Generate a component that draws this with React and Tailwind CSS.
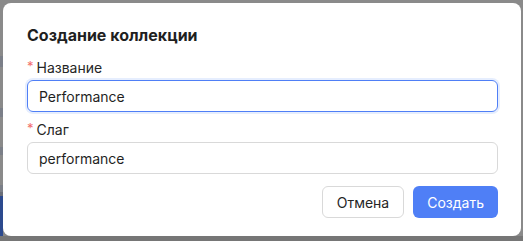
import { useState } from "react";

const Field = ({ label, value, onChange, focused }) => (
  <div className="flex flex-col">
    <label className="flex items-center h-[22px] mb-[2px] text-[14px] text-[#262626]">
      <span className="text-[#f26d6d] mr-[3px] text-[13px]">*</span>
      {label}
    </label>
    <input
      value={value}
      onChange={onChange}
      className={`h-[32px] w-full rounded-[6px] border px-[11px] text-[14px] text-[#1f1f1f] outline-none ${
        focused
          ? "border-[#4f7ff6] ring-2 ring-[#e6eefe]"
          : "border-[#d9d9d9]"
      }`}
    />
  </div>
);

const App = () => {
  const [name, setName] = useState("Performance");
  const [slug, setSlug] = useState("performance");

  return (
    <div
      className="relative w-[523px] h-[241px] overflow-hidden bg-[#8a8a8a]"
      style={{ fontFamily: "Inter, 'Noto Sans', sans-serif" }}
    >
      {/* page behind the overlay */}
      <div className="flex flex-col w-[3px] h-full pt-[56px]">
        <div className="h-[11px] bg-[#7b7f88]" />
        <div className="h-[41px]" />
        <div className="h-[9px] bg-[#7b7f88]" />
        <div className="h-[30px]" />
        <div className="h-[8px] bg-[#7b7f88]" />
        <div className="h-[30px]" />
        <div className="h-[7px] bg-[#7b7f88]" />
        <div className="h-[4px] bg-[#6a6e78]" />
        <div className="h-[40px] bg-[#2c4a8e]" />
      </div>
      <div className="absolute left-0 right-0 bottom-0 h-[5px] bg-[#767676]" />

      {/* modal */}
      <div className="absolute left-[3px] top-[3px] w-[518px] h-[233px] rounded-[8px] bg-white pt-[20px] pl-[24px] pr-[23px] pb-[18px] flex flex-col">
        <h2 className="h-[24px] flex items-center text-[16px] font-bold text-[#1f1f1f] mb-[9px]">
          Создание коллекции
        </h2>
        <Field label="Название" value={name} onChange={(e) => setName(e.target.value)} focused />
        <div className="h-[8px]" />
        <Field label="Слаг" value={slug} onChange={(e) => setSlug(e.target.value)} />
        <div className="flex justify-end gap-[9px] mt-[12px]">
          <button className="h-[32px] px-[14px] rounded-[6px] border border-[#d9d9d9] bg-white text-[14px] text-[#262626]">
            Отмена
          </button>
          <button className="h-[32px] px-[14px] rounded-[6px] bg-[#4f7ff6] text-[14px] text-white">
            Создать
          </button>
        </div>
      </div>
    </div>
  );
};

export default App;
